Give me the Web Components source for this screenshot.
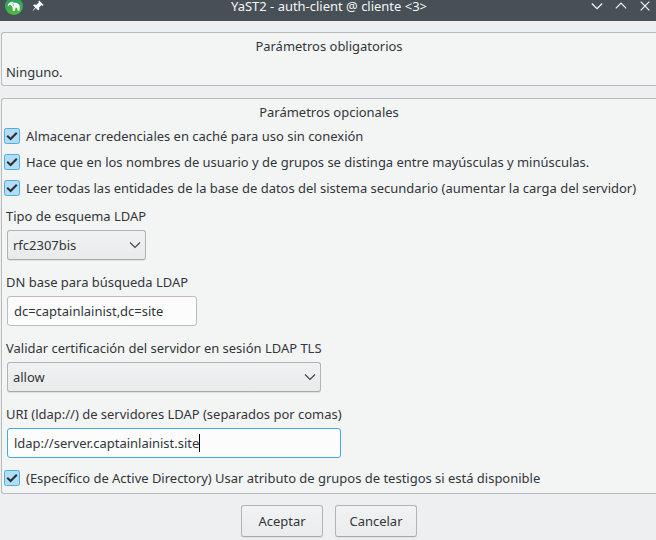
<!DOCTYPE html>
<html lang="es">
<head>
<meta charset="utf-8">
<title>YaST2 - auth-client</title>
<style>
html, body { margin: 0; height: 100%; overflow: hidden; }
body { font: 12.98px/18px "Noto Sans", sans-serif; color: #31363b; background: #eeeff0; }
</style>
</head>
<body>
<yast-window></yast-window>
<script>
const define = (name, html, setup) => customElements.define(name, class extends HTMLElement {
  connectedCallback() {
    if (this.shadowRoot) return;
    const t = document.createElement('template');
    t.innerHTML = html;
    this.attachShadow({ mode: 'open' }).append(t.content.cloneNode(true));
    if (setup) setup(this);
  }
});

define('title-bar', `
<style>
:host { display: grid; grid-template-columns: 1fr auto 1fr; height: 21px; background: #475057; color: #f4f5f5; box-sizing: border-box; }
.left, .right { display: flex; height: 21px; }
.right { justify-content: flex-end; }
.title { line-height: 12px; white-space: nowrap; padding-left: 2px; }
svg { display: block; flex: none; }
</style>
<div class="left">
  <svg width="56" height="21" viewBox="0 0 56 21">
    <defs><linearGradient id="g" x1="0" y1="0" x2="0" y2="1"><stop offset="0" stop-color="#239b6b"/><stop offset="1" stop-color="#55b83c"/></linearGradient></defs>
    <circle cx="14" cy="6" r="9" fill="url(#g)"/>
    <path d="M7.6 5.6 L8.6 3.4 L11 2.1 L12.5 1.8 L14 2.8 C17 2.2 19 3.6 19.8 6 L19.5 10.8 H17.7 L17 7.9 L15.6 7.6 L14.8 11 H12.8 L12.5 7.6 L11.6 6.2 L10.4 5 L9.2 4.9 L8.3 6.2 Z" fill="#f2f8f2"/>
    <path d="M11.6 3.2 L13.6 4.4 L13 6" fill="none" stroke="#55ad78" stroke-width=".6"/>
    <path d="M39.3 0.6 L43.6 4.9 L42.3 5.7 L41.3 5.2 L39.1 7.4 L39.3 9.6 L38.2 10.5 L35.8 8.1 L33.1 10.8 L32.7 10.4 L35.1 7.4 L33.1 5.2 L34.1 4.4 L36.4 4.7 L38.8 2.5 L38.3 1.5 Z" fill="#fcfcfc"/>
  </svg>
</div>
<div class="title"><slot></slot></div>
<div class="right">
  <svg width="70" height="21" viewBox="586 0 70 21" fill="none" stroke="#f7f8f8" stroke-width="1.2">
    <path d="M591.8 3.5 L597 8.7 L602.2 3.5"/>
    <path d="M615.8 8.3 L621 3.1 L626.2 8.3"/>
    <path d="M640.7 1.7 L649.3 10.3 M649.3 1.7 L640.7 10.3"/>
  </svg>
</div>`);

define('group-frame', `
<style>
:host { display: block; box-sizing: border-box; border: 1px solid #b9bcbd; border-right: 0; border-radius: 3px 0 0 3px; background: #f3f4f4; margin-left: 1px; padding: 4px 0 0 2px; }
h2 { margin: 0; font: inherit; text-align: center; padding-right: 2px; }
</style>
<h2></h2><slot></slot>`, el => el.shadowRoot.querySelector('h2').textContent = el.getAttribute('heading'));

define('check-option', `
<style>
:host { display: flex; align-items: center; gap: 6px; height: 18px; white-space: nowrap; }
svg { display: block; flex: none; }
</style>
<svg width="16" height="16" viewBox="0 0 16 16"><rect x=".5" y=".5" width="15" height="15" rx="1.8" fill="#b5dcf0" stroke="#46b0e7"/><path d="M3.2 7.8 L6.6 11 L12.8 4.7" fill="none" stroke="#26333c" stroke-width="2.1"/></svg>
<span><slot></slot></span>`);

define('form-field', `
<style>
:host { display: flex; flex-direction: column; align-items: flex-start; gap: 5px; padding-left: 2px; white-space: nowrap; }
::slotted(*) { margin-left: 1px; }
</style>
<label></label><slot></slot>`, el => el.shadowRoot.querySelector('label').textContent = el.getAttribute('label'));

define('combo-box', `
<style>
:host { display: flex; align-items: center; justify-content: space-between; box-sizing: border-box; height: 30px; padding: 0 4px 0 5px; border: 1px solid #b0b3b5; border-bottom-color: #a6a9ab; border-radius: 3px; background: linear-gradient(#f0f1f2, #e9eaeb); box-shadow: 0 1px 0 #dfe1e1; }
</style>
<span><slot></slot></span>
<svg width="12" height="8" viewBox="0 0 12 8" fill="none" stroke="#3d4247" stroke-width="1.1"><path d="M1 1.5 L6 6.5 L11 1.5"/></svg>`);

define('text-input', `
<style>
:host { display: flex; align-items: center; box-sizing: border-box; height: 30px; padding: 0 6px; border: 1px solid #bbbebf; border-radius: 3px; background: #fcfcfc; }
:host([active]) { border-color: #3fade2; }
i { display: none; width: 1px; height: 18px; background: #000; }
:host([active]) i { display: block; }
</style>
<span><slot></slot></span><i></i>`);

define('push-button', `
<style>
:host { display: flex; align-items: center; justify-content: center; box-sizing: border-box; width: 82px; height: 32px; border: 1px solid #b2b5b7; border-bottom-color: #a8abad; border-radius: 3px; background: linear-gradient(#f1f2f3, #ebeced); box-shadow: 0 1px 0 #dfe1e1; }
</style><span><slot></slot></span>`);

define('yast-window', `
<style>
:host { display: flex; flex-direction: column; height: 540px; }
.one { margin-top: 11px; height: 54px; }
.one p { margin: 8px 0 0 2px; }
.two { margin-top: 12px; height: 396px; }
.checks { display: flex; flex-direction: column; gap: 8px; margin: 6px 0 10px; }
.fields { display: flex; flex-direction: column; gap: 13px; margin-bottom: 11px; }
.buttons { display: flex; justify-content: center; gap: 12px; margin-top: 11px; padding-left: 2px; }
</style>
<title-bar>YaST2 - auth-client @ cliente &lt;3&gt;</title-bar>
<group-frame class="one" heading="Parámetros obligatorios"><p>Ninguno.</p></group-frame>
<group-frame class="two" heading="Parámetros opcionales">
  <div class="checks">
    <check-option>Almacenar credenciales en caché para uso sin conexión</check-option>
    <check-option>Hace que en los nombres de usuario y de grupos se distinga entre mayúsculas y minúsculas.</check-option>
    <check-option>Leer todas las entidades de la base de datos del sistema secundario (aumentar la carga del servidor)</check-option>
  </div>
  <div class="fields">
    <form-field label="Tipo de esquema LDAP"><combo-box style="width:139px">rfc2307bis</combo-box></form-field>
    <form-field label="DN base para búsqueda LDAP"><text-input style="width:190px">dc=captainlainist,dc=site</text-input></form-field>
    <form-field label="Validar certificación del servidor en sesión LDAP TLS"><combo-box style="width:314px">allow</combo-box></form-field>
    <form-field label="URI (ldap://) de servidores LDAP (separados por comas)"><text-input active style="width:334px">ldap://server.captainlainist.site</text-input></form-field>
  </div>
  <check-option>(Específico de Active Directory) Usar atributo de grupos de testigos si está disponible</check-option>
</group-frame>
<div class="buttons"><push-button>Aceptar</push-button><push-button>Cancelar</push-button></div>`);
</script>
</body>
</html>
